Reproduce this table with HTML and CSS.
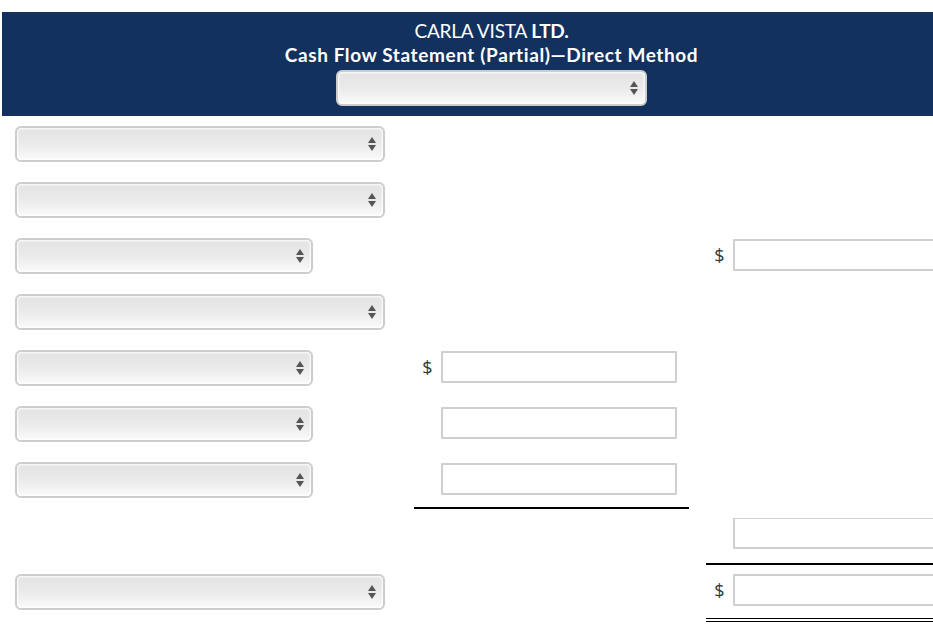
FILE: index.html
```html
<!DOCTYPE html>
<html>
<head>
<meta charset="utf-8">
<link rel="stylesheet" href="styles.css">
</head>
<body>
<div class="header">
  <div class="title">CARLA VISTA <b>LTD.</b></div>
  <div class="subtitle">Cash Flow Statement (Partial)—Direct Method</div>
  <div class="sel sel-head"><select></select><svg class="arr" width="8" height="14" viewBox="0 0 8 14"><path d="M4 0L8 6H0Z M0 8H8L4 14Z" fill="#555"/></svg></div>
</div>
<div class="sheet">
  <div class="row">
    <div class="c1"><div class="sel wide"><select></select><svg class="arr" width="8" height="14" viewBox="0 0 8 14"><path d="M4 0L8 6H0Z M0 8H8L4 14Z" fill="#555"/></svg></div></div>
    <div class="c2"></div><div class="gap"></div><div class="c3"></div>
  </div>
  <div class="row">
    <div class="c1"><div class="sel wide"><select></select><svg class="arr" width="8" height="14" viewBox="0 0 8 14"><path d="M4 0L8 6H0Z M0 8H8L4 14Z" fill="#555"/></svg></div></div>
    <div class="c2"></div><div class="gap"></div><div class="c3"></div>
  </div>
  <div class="row">
    <div class="c1"><div class="sel narrow"><select></select><svg class="arr" width="8" height="14" viewBox="0 0 8 14"><path d="M4 0L8 6H0Z M0 8H8L4 14Z" fill="#555"/></svg></div></div>
    <div class="c2"></div><div class="gap"></div>
    <div class="c3"><span class="dollar">$</span><input class="num" type="text"></div>
  </div>
  <div class="row">
    <div class="c1"><div class="sel wide"><select></select><svg class="arr" width="8" height="14" viewBox="0 0 8 14"><path d="M4 0L8 6H0Z M0 8H8L4 14Z" fill="#555"/></svg></div></div>
    <div class="c2"></div><div class="gap"></div><div class="c3"></div>
  </div>
  <div class="row">
    <div class="c1"><div class="sel narrow"><select></select><svg class="arr" width="8" height="14" viewBox="0 0 8 14"><path d="M4 0L8 6H0Z M0 8H8L4 14Z" fill="#555"/></svg></div></div>
    <div class="c2"><span class="dollar">$</span><input class="num" type="text"></div><div class="gap"></div><div class="c3"></div>
  </div>
  <div class="row">
    <div class="c1"><div class="sel narrow"><select></select><svg class="arr" width="8" height="14" viewBox="0 0 8 14"><path d="M4 0L8 6H0Z M0 8H8L4 14Z" fill="#555"/></svg></div></div>
    <div class="c2"><span class="dollar"></span><input class="num" type="text"></div><div class="gap"></div><div class="c3"></div>
  </div>
  <div class="row">
    <div class="c1"><div class="sel narrow"><select></select><svg class="arr" width="8" height="14" viewBox="0 0 8 14"><path d="M4 0L8 6H0Z M0 8H8L4 14Z" fill="#555"/></svg></div></div>
    <div class="c2 single"><span class="dollar"></span><input class="num" type="text"></div><div class="gap"></div><div class="c3"></div>
  </div>
  <div class="row">
    <div class="c1"></div>
    <div class="c2"></div><div class="gap"></div>
    <div class="c3 single"><span class="dollar"></span><input class="num" type="text"></div>
  </div>
  <div class="row">
    <div class="c1"><div class="sel wide"><select></select><svg class="arr" width="8" height="14" viewBox="0 0 8 14"><path d="M4 0L8 6H0Z M0 8H8L4 14Z" fill="#555"/></svg></div></div>
    <div class="c2"></div><div class="gap"></div>
    <div class="c3 double"><span class="dollar">$</span><input class="num" type="text"></div>
  </div>
</div>
</body>
</html>
```
FILE: styles.css
```css
html, body {
  margin: 0;
  padding: 0;
  background: #fff;
  overflow: hidden;
}
body {
  font-family: Lato, "Liberation Sans", sans-serif;
  width: 933px;
  height: 625px;
}
.header {
  margin: 12px 0 0 2px;
  height: 104px;
  box-sizing: border-box;
  padding: 7px 0 0 48px;
  background: #12315f;
  color: #fff;
  display: flex;
  flex-direction: column;
  align-items: center;
}
.title {
  font-size: 19px;
  line-height: 24px;
  letter-spacing: -0.2px;
}
.subtitle {
  font-size: 19px;
  font-weight: bold;
  line-height: 24px;
  letter-spacing: 0.6px;
}
.sel {
  position: relative;
  height: 36px;
}
.sel select {
  -webkit-appearance: none;
  appearance: none;
  width: 100%;
  height: 100%;
  box-sizing: border-box;
  border: 2px solid #cdcdcd;
  border-radius: 6px;
  background: linear-gradient(#e3e3e3, #ebebeb 55%, #fbfbfb);
  box-shadow: inset 0 0 2px 1px rgba(255,255,255,0.95);
  margin: 0;
  display: block;
}
.sel .arr {
  position: absolute;
  right: 9px;
  top: 11px;
  pointer-events: none;
}
.sel-head {
  width: 311px;
  margin-top: 3px;
}
.sheet {
  padding: 10px 0 0 15px;
}
.row {
  display: grid;
  grid-template-columns: 399px 275px 17px 227px;
  height: 56px;
}
.wide { width: 370px; }
.narrow { width: 298px; }
.c2, .c3 {
  display: flex;
  align-items: flex-start;
  box-sizing: border-box;
  height: 56px;
  overflow: hidden;
}
.c3 { width: 227px; }
.dollar {
  width: 27px;
  flex: none;
  text-align: center;
  font-size: 18px;
  line-height: 32px;
  margin-top: 1px;
  color: #2d3a46;
  font-family: "Open Sans", "DejaVu Sans", sans-serif;
}
.num {
  flex: none;
  width: 236px;
  height: 32px;
  box-sizing: border-box;
  margin: 1px 0 0 0;
  border: 2px solid #cfcfcf;
  border-radius: 1px;
  background: #fff;
  padding: 0 4px;
}
.single {
  height: 47px;
  border-bottom: 2px solid #000;
}
.c3.single .num { margin-top: -1px; }
.double {
  height: 48px;
  border-bottom: 4px double #000;
}
.c3.double .num, .c3.double .dollar { margin-top: 0; }
```
